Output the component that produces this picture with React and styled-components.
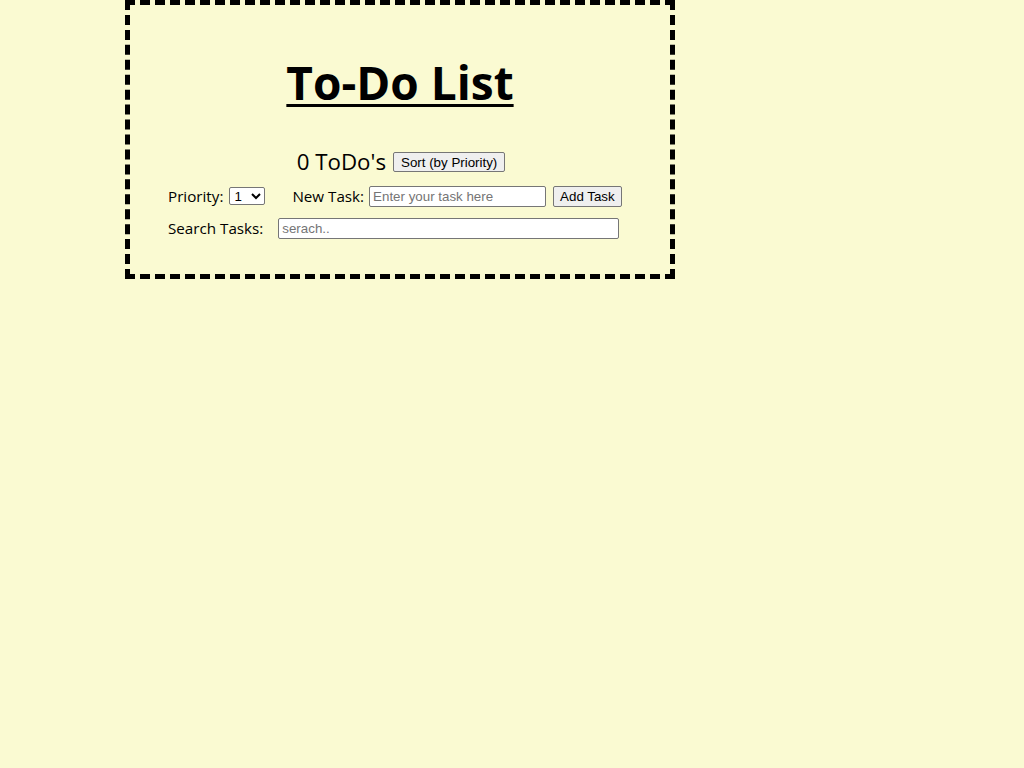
import React, { useState } from "react";
import styled, { createGlobalStyle } from "styled-components";

const GlobalStyle = createGlobalStyle`
  body {
    margin: 0;
    background-color: #fafad2;
    font-family: "Segoe UI", "Open Sans", sans-serif;
  }
`;

const Board = styled.div`
  box-sizing: border-box;
  width: 550px;
  margin-left: 125px;
  padding: 40px 38px 30px;
  border: 5px dashed #000;
`;

const Title = styled.h1`
  margin: 0 0 27px;
  text-align: center;
  font-size: 46px;
  font-weight: 700;
  line-height: 74px;
  text-decoration: underline;
  text-decoration-thickness: 3px;
  text-underline-offset: 4px;
`;

const Counter = styled.div`
  display: flex;
  align-items: center;
  justify-content: center;
  gap: 7px;
  margin-bottom: 2px;
  padding-left: 2px;
  font-size: 22.3px;
  line-height: 32px;
  white-space: nowrap;
`;

const Row = styled.div`
  display: flex;
  align-items: center;
  gap: ${(p) => p.$gap || 4}px;
  height: 32px;
  font-size: 15.2px;
  white-space: nowrap;
`;

const Field = styled.label`
  display: flex;
  align-items: center;
  flex-shrink: 0;
  gap: ${(p) => p.$gap || 4}px;
  margin-right: ${(p) => p.$space || 0}px;
`;

const Btn = styled.button`
  flex-shrink: 0;
  font-family: Arial, "Liberation Sans", sans-serif;
  font-size: 13.33px;
  padding: 1px ${(p) => p.$px || 6}px;
  height: ${(p) => p.$h || 21}px;
  background: #efefef;
  border: 1px solid #767676;
  border-radius: 2px;
  color: #000;
  white-space: nowrap;
`;

const Select = styled.select`
  font-family: Arial, "Liberation Sans", sans-serif;
  font-size: 13.33px;
  width: 36px;
  height: 18px;
  padding: 0;
  background: #fff;
  border: 1px solid #767676;
  border-radius: 2px;
`;

const TextInput = styled.input`
  box-sizing: border-box;
  flex-shrink: 0;
  font-family: Arial, "Liberation Sans", sans-serif;
  font-size: 13.33px;
  width: ${(p) => p.$w}px;
  height: 21px;
  padding: 1px 3px;
  background: #fff;
  border: 1px solid #767676;
  border-radius: 2px;
  &::placeholder {
    color: #757575;
  }
`;

export default function App() {
  const [todos] = useState([]);
  return (
    <>
      <GlobalStyle />
      <Board>
        <Title>To-Do List</Title>
        <Counter>
          <span>{todos.length} ToDo's</span>
          <Btn $h={20} $px={7}>Sort (by Priority)</Btn>
        </Counter>
        <Row $gap={7}>
          <Field $gap={6} $space={20}>
            Priority:
            <Select defaultValue="1">
              {[1, 2, 3, 4, 5].map((n) => (
                <option key={n}>{n}</option>
              ))}
            </Select>
          </Field>
          <Field $gap={5}>
            New Task:
            <TextInput $w={177} placeholder="Enter your task here" />
          </Field>
          <Btn>Add Task</Btn>
        </Row>
        <Row $gap={15}>
          <span>Search Tasks:</span>
          <TextInput $w={341} placeholder="serach.." />
        </Row>
      </Board>
    </>
  );
}
